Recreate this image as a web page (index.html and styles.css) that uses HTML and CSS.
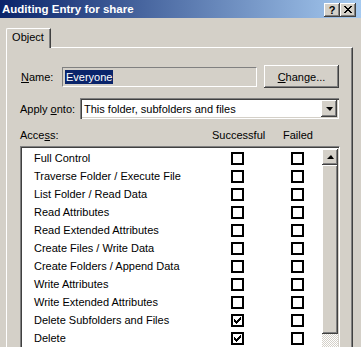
FILE: index.html
```html
<!DOCTYPE html>
<html>
<head>
    <title>Auditing Entry for share</title>
    <link rel="stylesheet" href="styles.css">
</head>
<body>
    <div class="window">
        <div class="titlebar">
            <span class="title">Auditing Entry for share</span>
            <div class="caption-buttons">
                <span class="cap-btn">?</span>
                <span class="cap-btn">
                    <svg width="8" height="7" viewBox="0 0 8 7" shape-rendering="crispEdges">
                        <path d="M0 0h2v1h-2zM6 0h2v1h-2zM1 1h2v1h-2zM5 1h2v1h-2zM2 2h4v1h-4zM3 3h2v1h-2zM2 4h4v1h-4zM1 5h2v1h-2zM5 5h2v1h-2zM0 6h2v1h-2zM6 6h2v1h-2z" fill="#000"/>
                    </svg>
                </span>
            </div>
        </div>

        <div class="tabs">
            <div class="tab">Object</div>
        </div>

        <div class="panel">
            <div class="row name-row">
                <label class="label name-label"><u>N</u>ame:</label>
                <div class="textbox"><span class="selected">Everyone</span></div>
                <button class="btn"><u>C</u>hange...</button>
            </div>

            <div class="row apply-row">
                <label class="label apply-label">Apply <u>o</u>nto:</label>
                <div class="combo">
                    <span class="combo-text">This folder, subfolders and files</span>
                    <span class="combo-btn"><span class="arrow-down"></span></span>
                </div>
            </div>

            <div class="row access-head">
                <span class="access-label">Acce<u>s</u>s:</span>
                <span class="col-head col-success">Successful</span>
                <span class="col-head col-failed">Failed</span>
            </div>

            <div class="listbox">
                <div class="list-rows">
                    <div class="item"><span class="item-name">Full Control</span><span class="check"></span><span class="check"></span></div>
                    <div class="item"><span class="item-name">Traverse Folder / Execute File</span><span class="check"></span><span class="check"></span></div>
                    <div class="item"><span class="item-name">List Folder / Read Data</span><span class="check"></span><span class="check"></span></div>
                    <div class="item"><span class="item-name">Read Attributes</span><span class="check"></span><span class="check"></span></div>
                    <div class="item"><span class="item-name">Read Extended Attributes</span><span class="check"></span><span class="check"></span></div>
                    <div class="item"><span class="item-name">Create Files / Write Data</span><span class="check"></span><span class="check"></span></div>
                    <div class="item"><span class="item-name">Create Folders / Append Data</span><span class="check"></span><span class="check"></span></div>
                    <div class="item"><span class="item-name">Write Attributes</span><span class="check"></span><span class="check"></span></div>
                    <div class="item"><span class="item-name">Write Extended Attributes</span><span class="check"></span><span class="check"></span></div>
                    <div class="item"><span class="item-name">Delete Subfolders and Files</span><span class="check"><svg width="7" height="7" viewBox="0 0 7 7" shape-rendering="crispEdges"><path d="M0 2h1v3h-1zM1 3h1v3h-1zM2 4h1v3h-1zM3 3h1v3h-1zM4 2h1v3h-1zM5 1h1v3h-1zM6 0h1v3h-1z" fill="#000"/></svg></span><span class="check"></span></div>
                    <div class="item"><span class="item-name">Delete</span><span class="check"><svg width="7" height="7" viewBox="0 0 7 7" shape-rendering="crispEdges"><path d="M0 2h1v3h-1zM1 3h1v3h-1zM2 4h1v3h-1zM3 3h1v3h-1zM4 2h1v3h-1zM5 1h1v3h-1zM6 0h1v3h-1z" fill="#000"/></svg></span><span class="check"></span></div>
                </div>
                <div class="scrollbar">
                    <span class="scroll-btn"><span class="arrow-up"></span></span>
                    <span class="thumb"></span>
                    <span class="track"></span>
                </div>
            </div>
        </div>
    </div>
</body>
</html>
```

FILE: styles.css
```css
body {
    margin: 0;
    background: #d4d0c8;
}
.window {
    width: 361px;
    height: 347px;
    overflow: hidden;
    background: #d4d0c8;
    font-family: "Liberation Sans", Arial, sans-serif;
    font-size: 11px;
    color: #000;
}
.titlebar {
    height: 18px;
    background: linear-gradient(to right, #0a246a, #a6caf0);
    display: flex;
    align-items: center;
    justify-content: space-between;
    padding: 0 5px 0 2px;
}
.title {
    color: #fff;
    font-weight: bold;
    font-size: 11.5px;
}
.caption-buttons {
    display: flex;
    margin-top: 1px;
}
.cap-btn {
    width: 16px;
    height: 14px;
    box-sizing: border-box;
    background: #d4d0c8;
    box-shadow: inset -1px -1px #404040, inset 1px 1px #fff, inset -2px -2px #808080;
    display: flex;
    align-items: center;
    justify-content: center;
    font-weight: bold;
    font-size: 11px;
    line-height: 14px;
}
.tabs {
    margin-top: 10px;
    padding-left: 6px;
    height: 19px;
}
.tab {
    position: relative;
    z-index: 1;
    width: 45px;
    height: 20px;
    box-sizing: border-box;
    background: #d4d0c8;
    border-top: 1px solid #fff;
    border-left: 1px solid #fff;
    border-right: 1px solid #404040;
    border-top-left-radius: 2px;
    box-shadow: inset -1px 0 #808080;
    text-align: center;
    line-height: 17px;
    padding-right: 1px;
}
.panel {
    margin-left: 6px;
    width: 347px;
    height: 320px;
    box-sizing: border-box;
    border-top: 1px solid #fff;
    border-left: 1px solid #fff;
    border-right: 1px solid #404040;
    box-shadow: inset -1px 0 #808080;
    padding: 17px 0 0 13px;
}
.row {
    display: flex;
    align-items: center;
}
.name-row {
    height: 23px;
}
.name-label {
    width: 42px;
    padding-left: 1px;
    box-sizing: border-box;
}
.textbox {
    width: 195px;
    height: 20px;
    box-sizing: border-box;
    border-top: 1px solid #808080;
    border-left: 1px solid #808080;
    border-right: 1px solid #fff;
    border-bottom: 1px solid #fff;
    padding: 2px 0 0 2px;
    line-height: 14px;
}
.selected {
    background: #0a246a;
    color: #fff;
    padding: 0 1px;
    display: inline-block;
}
.btn {
    margin-left: 7px;
    width: 75px;
    height: 23px;
    background: #d4d0c8;
    border: none;
    font-family: inherit;
    font-size: 11px;
    color: #000;
    box-shadow: inset -1px -1px #404040, inset 1px 1px #fff, inset -2px -2px #808080;
    padding: 0;
}
.apply-row {
    margin-top: 10px;
    height: 21px;
}
.apply-label {
    width: 60px;
}
.combo {
    width: 259px;
    height: 21px;
    box-sizing: border-box;
    background: #fff;
    box-shadow: inset 1px 1px #808080, inset 2px 2px #404040, inset -1px -1px #fff, inset -2px -2px #d4d0c8;
    display: flex;
    align-items: center;
    padding: 0 2px 0 4px;
}
.combo-text {
    flex: 1;
}
.combo-btn {
    width: 16px;
    height: 17px;
    box-sizing: border-box;
    background: #d4d0c8;
    box-shadow: inset -1px -1px #404040, inset 1px 1px #fff, inset -2px -2px #808080;
    display: flex;
    align-items: center;
    justify-content: center;
}
.arrow-down {
    width: 0;
    height: 0;
    border-left: 4px solid transparent;
    border-right: 3px solid transparent;
    border-top: 4px solid #000;
}
.arrow-up {
    width: 0;
    height: 0;
    border-left: 4px solid transparent;
    border-right: 3px solid transparent;
    border-bottom: 4px solid #000;
}
.access-head {
    margin-top: 9px;
    height: 14px;
}
.access-label {
    width: 192px;
}
.col-success {
    width: 71px;
}
.listbox {
    margin-top: 4px;
    width: 320px;
    height: 240px;
    box-sizing: border-box;
    background: #fff;
    border-top: 1px solid #808080;
    border-left: 1px solid #808080;
    border-right: 1px solid #fff;
    border-bottom: 1px solid #fff;
    box-shadow: inset 1px 1px #404040, inset -1px -1px #d4d0c8;
    padding: 1px;
    display: flex;
}
.list-rows {
    flex: 1;
    min-width: 0;
    padding-top: 1px;
}
.item {
    height: 18px;
    display: flex;
    align-items: center;
    padding-left: 12px;
}
.item-name {
    width: 197px;
    flex-shrink: 0;
    white-space: nowrap;
}
.check {
    width: 13px;
    height: 13px;
    flex-shrink: 0;
    box-sizing: border-box;
    border: 2px solid #000;
    background: #fff;
    display: flex;
    align-items: center;
    justify-content: center;
}
.check + .check {
    margin-left: 47px;
}
.scrollbar {
    width: 16px;
    flex-shrink: 0;
    display: flex;
    flex-direction: column;
    padding-top: 1px;
}
.scroll-btn {
    height: 16px;
    flex-shrink: 0;
    background: #d4d0c8;
    box-shadow: inset -1px -1px #404040, inset 1px 1px #fff, inset -2px -2px #808080;
    display: flex;
    align-items: center;
    justify-content: center;
}
.thumb {
    height: 169px;
    flex-shrink: 0;
    background: #d4d0c8;
    box-shadow: inset -1px -1px #404040, inset 1px 1px #fff, inset -2px -2px #808080;
}
.track {
    flex: 1;
    background: repeating-conic-gradient(#fff 0 25%, #d4d0c8 0 50%) 0 0 / 2px 2px;
}
```
